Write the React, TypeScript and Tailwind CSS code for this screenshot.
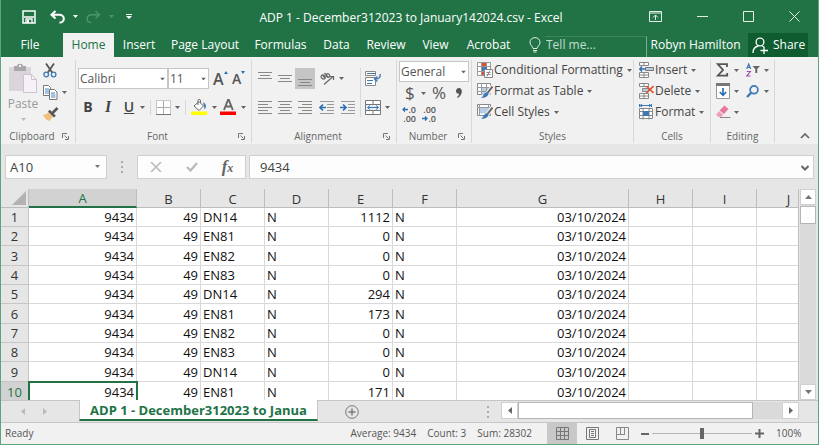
import type { ReactNode } from 'react';

const FONT = "font-['Open_Sans','Noto_Sans',sans-serif]";

/* ---------- small shared pieces ---------- */

function Caret({ className = 'text-[#666]' }: { className?: string }) {
  return (
    <svg width="5" height="3" viewBox="0 0 5 3" className={`shrink-0 ${className}`} aria-hidden="true">
      <path d="M0 0h5L2.5 3z" fill="currentColor" />
    </svg>
  );
}

function IconButton({ label, className = '', children }: { label: string; className?: string; children: ReactNode }) {
  return (
    <button type="button" aria-label={label} className={`flex shrink-0 items-center justify-center ${className}`}>
      {children}
    </button>
  );
}

function Launcher() {
  return (
    <svg width="7" height="7" viewBox="0 0 7 7" fill="none" stroke="#777" aria-hidden="true">
      <path d="M.5 5V.5H5M2.5 2.5l3 3M6.5 3v3.5H3" />
    </svg>
  );
}

function Group({
  name,
  width,
  launcher = false,
  children,
}: {
  name: string;
  width: string;
  launcher?: boolean;
  children: ReactNode;
}) {
  return (
    <section aria-label={name} className={`flex shrink-0 flex-col border-r border-[#d8d8d8] ${width}`}>
      <div className="h-[70px]">{children}</div>
      <div className="flex h-[13px] items-center text-[10px] leading-[13px] text-[#666]">
        <span className={`flex-1 text-center ${launcher ? 'pl-1' : ''}`}>{name}</span>
        {launcher && (
          <IconButton label={`${name} settings`} className="mr-1 h-3 w-3">
            <Launcher />
          </IconButton>
        )}
      </div>
    </section>
  );
}

function Divider({ className = '' }: { className?: string }) {
  return <span className={`w-px shrink-0 bg-[#d8d8d8] ${className}`} />;
}

/* ---------- icons ---------- */

const SaveIcon = () => (
  <svg width="14" height="14" viewBox="0 0 14 14" aria-hidden="true">
    <path d="M1 1h12v12H1z" fill="none" stroke="#fff" strokeWidth="1.5" />
    <path d="M2 7h10M4 13V9h6v4" fill="none" stroke="#fff" strokeWidth="1.3" />
    <path d="M5 10h2v3H5z" fill="#fff" />
  </svg>
);

const UndoIcon = ({ flip = false }: { flip?: boolean }) => (
  <svg width="15" height="14" viewBox="0 0 15 14" className={flip ? '-scale-x-100' : ''} aria-hidden="true">
    <path
      d="M5.5 1 1.5 4.8l4 3.8M2 4.8h7.2c3 0 4.6 1.7 4.6 3.9S12 12.6 9.500 12.6"
      fill="none"
      stroke={flip ? '#4f9470' : '#fff'}
      strokeWidth={flip ? 1.4 : 2.1}
    />
  </svg>
);

const PasteIcon = () => (
  <svg width="28" height="30" viewBox="0 0 28 30" aria-hidden="true">
    <path d="M0 4h22v24H0z" fill="#d9d5da" />
    <path d="M5 8V3h3c0-3 6-3 6 0h3v5z" fill="#aaa7ab" />
    <path d="M10 2h2v2h-2z" fill="#f1f1f1" />
    <path d="M14.500 11.500h8l5 5v13h-13z" fill="#f6f1f8" stroke="#c9c5cb" />
    <path d="M22.500 11.500v5h5" fill="none" stroke="#c9c5cb" />
  </svg>
);

const CutIcon = () => (
  <svg width="14" height="15" viewBox="0 0 14 15" fill="none" aria-hidden="true">
    <path d="M3 0.500 9.500 10M11 .5 4.500 10" stroke="#555" strokeWidth="1.8" />
    <circle cx="3.200" cy="11.500" r="2.300" stroke="#3e79b4" strokeWidth="1.300" />
    <circle cx="10.600" cy="11.500" r="2.300" stroke="#3e79b4" strokeWidth="1.300" />
  </svg>
);

const CopyIcon = () => (
  <svg width="15" height="15" viewBox="0 0 15 15" fill="#fff" stroke="#777" aria-hidden="true">
    <path d="M.5.5h5l2 2v8h-7z" />
    <path d="M2 4h4M2 6h4M2 8h4" stroke="#4a87bf" />
    <path d="M6.500 4.500h5l2.500 2.500v7.500H6.500z" />
    <path d="M8 8h4M8 10h4.500M8 12h4.500" stroke="#4a87bf" />
  </svg>
);

const BrushIcon = () => (
  <svg width="16" height="15" viewBox="0 0 16 15" aria-hidden="true">
    <path d="M0 7.500c2 .3 4-.6 5.500-2.500l4.500 4.500L6.500 14C3.500 13.300 1 11 0 7.500z" fill="#eec07c" />
    <path d="m5 4.500 1.800-1.700 6 6L11 10.500z" fill="#555" />
    <path d="m9.500 6 5-5" stroke="#555" strokeWidth="2.600" />
  </svg>
);

const BordersIcon = () => (
  <svg width="15" height="15" viewBox="0 0 15 15" aria-hidden="true">
    <path d="M.5.5h14v14H.5z" fill="#fff" stroke="#999" strokeDasharray="1 1" />
    <path d="M7.500 1v13M1 7.500h13" stroke="#aaa" />
    <path d="M0 14.500h15" stroke="#777" />
  </svg>
);

const FillIcon = () => (
  <svg width="17" height="16" viewBox="0 0 17 16" aria-hidden="true">
    <path d="m8 2.500 4.500 4.500-4.500 4.500L3 7z" fill="#fff" stroke="#666" />
    <path d="M7 6V1.500C7 0 9.500 0 9.500 1.500V4" fill="none" stroke="#666" />
    <path d="M12 3.500c3.200.5 3.700 4 2 7-1-1.500-1-4.500-2-7z" fill="#3e79b4" />
    <path d="M0 12.500h16V16H0z" fill="#ff0" />
  </svg>
);

const FontColorIcon = () => (
  <svg width="17" height="16" viewBox="0 0 17 16" aria-hidden="true">
    <path d="m4 11 4-10h.8l4 10M5.500 7.500h6" fill="none" stroke="#666" strokeWidth="1.900" />
    <path d="M0 12.500h16V16H0z" fill="#f00" />
  </svg>
);

const LINES = {
  top: 'M0 1.500h14M2 4.500h10M0 7.500h14',
  middle: 'M0 4.500h14M2 7.500h10M0 10.500h14',
  bottom: 'M0 8.500h14M2 11.500h10M0 14.500h14',
  left: 'M0 1.500h14M0 4.500h10M0 7.500h14M0 10.500h10M0 13.500h14',
  center: 'M0 1.500h14M2 4.500h10M0 7.500h14M2 10.500h10M0 13.500h14',
  right: 'M0 1.500h14M4 4.500h10M0 7.500h14M4 10.500h10M0 13.500h14',
};

const LinesIcon = ({ kind }: { kind: keyof typeof LINES }) => (
  <svg width="14" height="15" viewBox="0 0 14 15" aria-hidden="true">
    <path d={LINES[kind]} stroke="#888" />
  </svg>
);

const IndentIcon = ({ out = false }: { out?: boolean }) => (
  <svg width="15" height="15" viewBox="0 0 15 15" fill="none" aria-hidden="true">
    <path d="M1 1.500h14M8 4.500h7M8 7.500h7M8 10.500h7M1 13.500h14" stroke="#999" />
    <path d={out ? 'M7 7.500H1M4 4.500l-3 3 3 3' : 'M0 7.500h6M3 4.500l3 3-3 3'} stroke="#2e6fb0" strokeWidth="1.700" />
  </svg>
);

const OrientIcon = () => (
  <svg width="15" height="13" viewBox="0 0 15 13" fill="none" stroke="#666" aria-hidden="true">
    <ellipse cx="3.200" cy="5" rx="1.800" ry="2.200" transform="rotate(-45 3.200 5)" strokeWidth="1.200" />
    <path d="m2.500 3 3 3.500M4.500 1l4 4.500" strokeWidth="1.200" />
    <ellipse cx="8" cy="3.500" rx="1.600" ry="2" transform="rotate(-45 8 3.500)" strokeWidth="1.200" />
    <path d="m4 12.500 9-8M10 4.500h3.500V8" strokeWidth="1.200" />
  </svg>
);

const WrapIcon = () => (
  <svg width="17" height="16" viewBox="0 0 17 16" fill="none" aria-hidden="true">
    <path d="M.5.5h10v4H.5zM.5 6.500h10v8H.5z" fill="#fff" stroke="#888" />
    <path d="M2 2.500h9M2 9.500h6M2 12.500h5" stroke="#3e79b4" />
    <path d="M15 3c1 3-1 5-4.500 5M12.500 5.500l-3 2.500 3 2.500" stroke="#3e79b4" strokeWidth="1.400" />
  </svg>
);

const MergeIcon = () => (
  <svg width="16" height="15" viewBox="0 0 16 15" fill="none" aria-hidden="true">
    <path d="M.5.5h15v14H.5zM8 .5v4M8 10.500v4" fill="#fff" stroke="#777" />
    <path d="M.5 4.500h15v6H.5z" fill="#e4eff8" stroke="#777" />
    <path d="M3 7.500h10M5 5.500l-2.500 2L5 9.500M11 5.500l2.500 2L11 9.500" stroke="#3e79b4" />
  </svg>
);

const ArrowBlue = ({ left = false }: { left?: boolean }) => (
  <svg width="6" height="5" viewBox="0 0 6 5" fill="none" stroke="#2e6fb0" strokeWidth="1.300" aria-hidden="true">
    <path d={left ? 'M6 2.500H1M3 .5l-2 2 2 2' : 'M0 2.500h5M3 .5l2 2-2 2'} />
  </svg>
);

const DecimalIcon = ({ more = false }: { more?: boolean }) => (
  <span className="flex w-4 flex-col text-[9px] leading-[9px] font-semibold text-[#555]">
    <span className="flex items-center justify-end">
      {more && <ArrowBlue left />}
      {more ? '.0' : '.00'}
    </span>
    <span className="flex items-center justify-end">
      {!more && <ArrowBlue />}
      {more ? '.00' : '.0'}
    </span>
  </span>
);

const CondIcon = () => (
  <svg width="16" height="16" viewBox="0 0 16 16" aria-hidden="true">
    <path d="M.5.5h13v13H.5zM4.500 0v14M9.500 0v14M0 4.500h14M0 9.500h14" fill="#fff" stroke="#999" />
    <path d="M5 1h4v3H5zM5 10h3v3H5z" fill="#e0502f" />
    <path d="M5 5h5v4H5z" fill="#3e79b4" />
    <path d="M7.500 7.500h8v8h-8z" fill="#fff" stroke="#888" />
    <path d="M9.500 10.500h4M9.500 12.500h4M10 14.500l3-6" stroke="#888" />
  </svg>
);

const TableStyleIcon = ({ cell = false }: { cell?: boolean }) => (
  <svg width="16" height="16" viewBox="0 0 16 16" aria-hidden="true">
    <path d="M.5.5h13v11H.5z" fill="#fff" stroke="#888" />
    <path d={cell ? 'M3 3.500h9v6H3z' : 'M4 4h10v8H4z'} fill="#b7cfe6" />
    <path d={cell ? 'M2.500 0v12M0 3.500h14M11.500 0v4' : 'M4.500 0v12M9.500 0v12M0 4.500h14M0 8.500h14'} stroke="#999" />
    <path d="M15.500 3.500 10 11" stroke="#f1f1f1" strokeWidth="4" />
    <path d="M15.500 3.500 10.500 10" stroke="#666" strokeWidth="2" />
    <path d="M11 9.500c1.500 2-1 5.500-7 5.500 2-1 2-3 3.500-4.500 1-1 2.500-1.500 3.500-1z" fill="#3e79b4" />
  </svg>
);

const InsertIcon = () => (
  <svg width="15" height="16" viewBox="0 0 15 16" fill="#fff" stroke="#888" aria-hidden="true">
    <path d="M.5.5h9v3h-9zM5 .5v3M.5 10.500h9v5h-9zM5 10.500v5M.5 13h9" />
    <path d="M6.500 5.500h8v3h-8z" fill="#b7cfe6" stroke="#777" />
    <path d="M6 7H1M3 4.500.8 7 3 9.500" fill="none" stroke="#2e6fb0" strokeWidth="1.400" />
  </svg>
);

const DeleteIcon = () => (
  <svg width="15" height="16" viewBox="0 0 15 16" fill="#fff" stroke="#888" aria-hidden="true">
    <path d="M.5.5h9v3h-9zM5 .5v3M.5 10.500h9v5h-9zM5 10.500v5M.5 13h9" />
    <path d="M3.500 5.500h6v3h-6z" fill="#b7cfe6" />
    <path d="m7.500 3 7 7M14.500 3l-7 7" fill="none" stroke="#e0502f" strokeWidth="1.700" />
  </svg>
);

const FormatIcon = () => (
  <svg width="15" height="16" viewBox="0 0 15 16" fill="#fff" aria-hidden="true">
    <path d="M.5 4.500h13v10H.5zM4 4.500v11M10 4.500v11M.5 7.500h13M.5 11.500h13" stroke="#888" />
    <path d="M4 7h6v5H4z" fill="#3e79b4" />
    <path d="M1 1.500h11M.5 0v3M12.500 0v3M3 0 1 1.500 3 3M10 0l2 1.500L10 3" fill="none" stroke="#3e79b4" />
  </svg>
);

const SigmaIcon = () => (
  <svg width="13" height="14" viewBox="0 0 13 14" fill="none" stroke="#555" strokeWidth="1.800" aria-hidden="true">
    <path d="M11 4V1.200H1.800L7 7l-5.200 5.600H11.200V10" />
  </svg>
);

const SortIcon = () => (
  <svg width="15" height="14" viewBox="0 0 15 14" fill="none" aria-hidden="true">
    <path d="m.7 6 2-5 2 5M1.300 4.300h2.900" stroke="#3e79b4" strokeWidth="1.200" />
    <path d="M.8 8.500h3.500L.8 13h3.700" stroke="#9653a8" strokeWidth="1.200" />
    <path d="M6.500 3H14l-2.800 3v4H9.300V6z" fill="#666" />
  </svg>
);

const FillDownIcon = () => (
  <svg width="14" height="16" viewBox="0 0 14 16" fill="none" aria-hidden="true">
    <path d="M.5.5h13v15H.5z" fill="#fff" stroke="#999" />
    <path d="M0 0h14v3H0z" fill="#777" />
    <path d="M7 5v7M3.800 9 7 12.300 10.200 9" stroke="#2e6fb0" strokeWidth="1.700" />
  </svg>
);

const SearchIcon = () => (
  <svg width="13" height="13" viewBox="0 0 13 13" fill="none" stroke="#3e79b4" aria-hidden="true">
    <circle cx="8" cy="4.800" r="3.900" strokeWidth="1.700" />
    <path d="M5.300 7.700 1 12" strokeWidth="2.400" />
  </svg>
);

const EraserIcon = () => (
  <svg width="15" height="14" viewBox="0 0 15 14" aria-hidden="true">
    <path d="M8.500.5 12.500 4 8 9 3.500 5.500z" fill="#e8799a" />
    <path d="M3 6.200 7.400 9.700 5 12H2.500L0 9.700z" fill="#f0a0b5" />
    <path d="M4 12.500h10.500" stroke="#888" />
  </svg>
);

/* ---------- window chrome ---------- */

function TitleBar() {
  return (
    <header className="flex h-[33px] shrink-0 items-center bg-[#217346] text-white">
      <div className="flex flex-1 items-center pl-[21px]">
        <IconButton label="Save">
          <SaveIcon />
        </IconButton>
        <IconButton label="Undo" className="ml-[14px] gap-2">
          <UndoIcon />
          <Caret className="text-white" />
        </IconButton>
        <IconButton label="Redo" className="ml-2 gap-2">
          <UndoIcon flip />
          <Caret className="text-[#4f9470]" />
        </IconButton>
        <IconButton label="Customize toolbar" className="ml-3">
          <svg width="6" height="6" viewBox="0 0 6 6" aria-hidden="true">
            <path d="M0 0h6v1H0zM0 2h6L3 5z" fill="#fff" />
          </svg>
        </IconButton>
      </div>
      <h1 className="pt-[3px] text-xs leading-4">ADP 1 - December312023 to January142024.csv - Excel</h1>
      <div className="flex flex-1 items-center justify-end gap-[35px] pr-[18px]">
        <IconButton label="Ribbon display options">
          <svg width="13" height="11" viewBox="0 0 13 11" fill="none" stroke="#e3efe8" aria-hidden="true">
            <path d="M.5.5h12v10H.5zM0 2h13M6.500 9V4M4 6.500 6.500 4 9 6.500" />
          </svg>
        </IconButton>
        <IconButton label="Minimize">
          <svg width="11" height="11" viewBox="0 0 11 11" stroke="#e3efe8" aria-hidden="true">
            <path d="M0 5.500h11" />
          </svg>
        </IconButton>
        <IconButton label="Maximize">
          <svg width="11" height="11" viewBox="0 0 11 11" fill="none" stroke="#e3efe8" aria-hidden="true">
            <path d="M.5.5h10v10H.5z" />
          </svg>
        </IconButton>
        <IconButton label="Close">
          <svg width="11" height="11" viewBox="0 0 11 11" stroke="#e3efe8" aria-hidden="true">
            <path d="m.5.5 10 10M10.500.5l-10 10" />
          </svg>
        </IconButton>
      </div>
    </header>
  );
}

const TABS: [string, string][] = [
  ['Insert', 'w-[50px]'],
  ['Page Layout', 'w-[82px]'],
  ['Formulas', 'w-[69px]'],
  ['Data', 'w-[43px]'],
  ['Review', 'w-[56px]'],
  ['View', 'w-[43px]'],
  ['Acrobat', 'w-[63px]'],
];

function TabBar() {
  return (
    <nav className="flex h-6 shrink-0 bg-[#217346] text-xs whitespace-nowrap text-white">
      <button type="button" className="w-[62px] shrink-0 pr-1">
        File
      </button>
      <button type="button" className="w-[51px] shrink-0 bg-[#f1f1f1] text-[#217346]">
        Home
      </button>
      {TABS.map(([name, width]) => (
        <button key={name} type="button" className={`shrink-0 ${width}`}>
          {name}
        </button>
      ))}
      <label htmlFor="tell-me" aria-label="Tell me" className="flex w-[25px] shrink-0 items-center pl-[9px]">
        <svg width="12" height="16" viewBox="0 0 12 16" fill="none" stroke="#e3efe8" aria-hidden="true">
          <path d="M4 11.500c0-2-3-3-3-6 0-6.500 10-6.500 10 0 0 3-3 4-3 6z" />
          <path d="M4 13.500h4M4.500 15h3" />
        </svg>
      </label>
      <input
        id="tell-me"
        placeholder="Tell me..."
        className="mt-[3px] min-w-0 flex-1 border-t border-r border-t-[#3c8560] border-r-[#7fb096] pb-1 pl-px outline-none placeholder:text-[#c5dccf]"
      />
      <button type="button" className="w-[101px] shrink-0 pr-1">
        Robyn Hamilton
      </button>
      <button type="button" className="mr-[10px] flex w-[60px] shrink-0 items-center gap-1 bg-[#0e5c2f] pl-1">
        <svg width="17" height="17" viewBox="0 0 17 17" fill="none" stroke="#fff" strokeWidth="1.300" aria-hidden="true">
          <circle cx="8" cy="5" r="3.900" />
          <path d="M1 16c0-4 2.500-6.500 5.500-7M10 9c1 .3 1.800.8 2.500 1.500M12 10v7M8.500 13.500h7.500" />
        </svg>
        Share
      </button>
    </nav>
  );
}

/* ---------- ribbon ---------- */

function Combo({ label, value, width, height }: { label: string; value: string; width: string; height: string }) {
  return (
    <span className={`relative flex shrink-0 ${width} ${height}`}>
      <select
        aria-label={label}
        defaultValue={value}
        className="h-full w-full appearance-none border border-[#c6c6c6] bg-white pl-px text-xs text-[#555]"
      >
        <option>{value}</option>
      </select>
      <Caret className="pointer-events-none absolute top-1/2 right-[3px] -translate-y-1/2 text-[#666]" />
    </span>
  );
}

function ListButton({ icon, children }: { icon: ReactNode; children: ReactNode }) {
  return (
    <button type="button" className="flex h-5 items-center gap-px whitespace-nowrap">
      {icon}
      <span>{children}</span>
      <Caret className="ml-[3px] text-[#666]" />
    </button>
  );
}

function Ribbon() {
  return (
    <div className="flex h-[87px] shrink-0 overflow-hidden bg-[#f1f1f1] pt-[3px] pb-[1px] text-xs text-[#444]">
      <Group name="Clipboard" width="w-[75px]" launcher>
        <div className="flex gap-[5px] pt-[3px] pl-[7px]">
          <button type="button" className="flex w-[30px] shrink-0 flex-col items-center text-[#999]">
            <PasteIcon />
            <span className="pt-[3px] leading-4">Paste</span>
            <Caret className="mt-[6px] text-[#bbb]" />
          </button>
          <div className="flex flex-col items-start gap-[7px]">
            <IconButton label="Cut">
              <CutIcon />
            </IconButton>
            <IconButton label="Copy" className="gap-1">
              <CopyIcon />
              <Caret />
            </IconButton>
            <IconButton label="Format painter">
              <BrushIcon />
            </IconButton>
          </div>
        </div>
      </Group>

      <Group name="Font" width="w-[176px]" launcher>
        <div className="flex flex-col gap-2 pt-2 pl-[2px]">
          <div className="flex items-center">
            <Combo label="Font" value="Calibri" width="w-[90px]" height="h-[21px]" />
            <Combo label="Font size" value="11" width="w-[41px]" height="h-[21px]" />
            <button
              type="button"
              aria-label="Increase font size"
              className="ml-1 flex w-5 text-[16px] leading-5 font-semibold text-[#555]"
            >
              A
              <svg width="4" height="3" viewBox="0 0 4 3" className="mt-[2px]" aria-hidden="true">
                <path d="M0 3h4L2 0z" fill="#2e6fb0" />
              </svg>
            </button>
            <button
              type="button"
              aria-label="Decrease font size"
              className="flex w-5 text-[14px] leading-5 font-semibold text-[#555]"
            >
              A
              <svg width="4" height="3" viewBox="0 0 4 3" className="mt-[2px]" aria-hidden="true">
                <path d="M0 0h4L2 3z" fill="#2e6fb0" />
              </svg>
            </button>
          </div>
          <div className="flex h-5 items-center">
            <button type="button" className="w-5 text-[14px] font-bold">
              B
            </button>
            <button type="button" className="w-5 font-['Liberation_Serif',serif] text-[16px] font-bold italic">
              I
            </button>
            <button type="button" className="w-[22px] text-[14px] font-semibold underline">
              U
            </button>
            <IconButton label="Underline options">
              <Caret />
            </IconButton>
            <Divider className="mx-[5px] h-[15px]" />
            <IconButton label="Borders" className="gap-1">
              <BordersIcon />
              <Caret />
            </IconButton>
            <Divider className="mx-[5px] h-[15px]" />
            <IconButton label="Fill color" className="gap-1">
              <FillIcon />
              <Caret />
            </IconButton>
            <IconButton label="Font color" className="ml-[3px] gap-1">
              <FontColorIcon />
              <Caret />
            </IconButton>
          </div>
        </div>
      </Group>

      <Group name="Alignment" width="w-[145px]" launcher>
        <div className="flex pt-2 pl-[3px]">
          <div className="flex w-[105px] flex-col gap-2">
            <div className="flex h-[21px] items-center">
              <IconButton label="Top align" className="h-[21px] w-5">
                <LinesIcon kind="top" />
              </IconButton>
              <IconButton label="Middle align" className="h-[21px] w-5">
                <LinesIcon kind="middle" />
              </IconButton>
              <IconButton label="Bottom align" className="h-[21px] w-5 bg-[#c5c5c5]">
                <LinesIcon kind="bottom" />
              </IconButton>
              <IconButton label="Orientation" className="ml-[5px] gap-1">
                <OrientIcon />
                <Caret />
              </IconButton>
            </div>
            <div className="flex h-5 items-center">
              <IconButton label="Align left" className="w-5">
                <LinesIcon kind="left" />
              </IconButton>
              <IconButton label="Center" className="w-5">
                <LinesIcon kind="center" />
              </IconButton>
              <IconButton label="Align right" className="w-5">
                <LinesIcon kind="right" />
              </IconButton>
              <IconButton label="Decrease indent" className="w-[22px]">
                <IndentIcon out />
              </IconButton>
              <IconButton label="Increase indent" className="w-5">
                <IndentIcon />
              </IconButton>
            </div>
          </div>
          <Divider className="h-[49px]" />
          <div className="flex flex-col items-start gap-2 pl-1">
            <IconButton label="Wrap text" className="h-[21px]">
              <WrapIcon />
            </IconButton>
            <IconButton label="Merge and center" className="h-5 gap-1">
              <MergeIcon />
              <Caret />
            </IconButton>
          </div>
        </div>
      </Group>

      <Group name="Number" width="w-[75px]" launcher>
        <div className="flex flex-col px-[2px] pt-px">
          <Combo label="Number format" value="General" width="w-[70px]" height="h-[21px]" />
          <div className="flex h-[22px] items-center text-[17px] leading-5 text-[#555]">
            <button type="button" aria-label="Currency" className="flex w-[30px] items-center gap-[6px] pl-[6px]">
              $
              <Caret />
            </button>
            <button type="button" className="w-5">
              %
            </button>
            <IconButton label="Comma style" className="w-5">
              <svg width="6" height="10" viewBox="0 0 6 10" aria-hidden="true">
                <path d="M3 0c4 0 4 7-1.500 10L1 9c1.500-1 2-2 2-3.200C-1 6-1 0 3 0z" fill="#555" />
              </svg>
            </IconButton>
          </div>
          <div className="flex gap-1 pt-px pl-px">
            <IconButton label="Increase decimal">
              <DecimalIcon more />
            </IconButton>
            <IconButton label="Decrease decimal">
              <DecimalIcon />
            </IconButton>
          </div>
        </div>
      </Group>

      <Group name="Styles" width="w-[162px]">
        <div className="flex flex-col items-start gap-px pl-[5px]">
          <ListButton icon={<CondIcon />}>Conditional Formatting</ListButton>
          <ListButton icon={<TableStyleIcon />}>Format as Table</ListButton>
          <ListButton icon={<TableStyleIcon cell />}>Cell Styles</ListButton>
        </div>
      </Group>

      <Group name="Cells" width="w-[77px]">
        <div className="flex flex-col items-start gap-px pl-[5px]">
          <ListButton icon={<InsertIcon />}>Insert</ListButton>
          <ListButton icon={<DeleteIcon />}>Delete</ListButton>
          <ListButton icon={<FormatIcon />}>Format</ListButton>
        </div>
      </Group>

      <Group name="Editing" width="w-[64px]">
        <div className="grid grid-cols-[30px_30px] grid-rows-[20px_20px_20px] gap-y-px pl-[5px]">
          <IconButton label="AutoSum" className="justify-start gap-[5px]">
            <SigmaIcon />
            <Caret />
          </IconButton>
          <IconButton label="Sort and filter" className="justify-start gap-[3px]">
            <SortIcon />
            <Caret />
          </IconButton>
          <IconButton label="Fill" className="justify-start gap-1">
            <FillDownIcon />
            <Caret />
          </IconButton>
          <IconButton label="Find and select" className="justify-start gap-[5px]">
            <SearchIcon />
            <Caret />
          </IconButton>
          <IconButton label="Clear" className="justify-start gap-[3px]">
            <EraserIcon />
            <Caret />
          </IconButton>
        </div>
      </Group>

      <div className="flex flex-1 items-end justify-end pr-2 pb-1">
        <IconButton label="Collapse ribbon">
          <svg width="10" height="6" viewBox="0 0 10 6" fill="none" stroke="#666" strokeWidth="1.700" aria-hidden="true">
            <path d="m1 5 4-4 4 4" />
          </svg>
        </IconButton>
      </div>
    </div>
  );
}

/* ---------- formula bar ---------- */

function Dots() {
  return (
    <svg width="2" height="12" viewBox="0 0 2 12" fill="#aaa" aria-hidden="true">
      <path d="M0 0h2v2H0zM0 5h2v2H0zM0 10h2v2H0z" />
    </svg>
  );
}

function FormulaBar() {
  return (
    <div className="flex shrink-0 px-1 pt-[11px] pb-[10px] text-[13px] text-[#444]">
      <div className="relative flex h-6 w-[102px] shrink-0">
        <input
          aria-label="Name box"
          defaultValue="A10"
          className="h-full w-full border border-[#d0d0d0] bg-[#fdfdfd] pl-1 outline-none"
        />
        <Caret className="pointer-events-none absolute top-[10px] right-[7px] text-[#777]" />
      </div>
      <div className="flex w-[30px] shrink-0 items-center justify-center">
        <Dots />
      </div>
      <div className="flex h-6 w-[109px] shrink-0 items-center border border-[#d0d0d0] bg-[#fdfdfd]">
        <IconButton label="Cancel" className="w-9">
          <svg width="12" height="10" viewBox="0 0 12 10" stroke="#bcbcbc" strokeWidth="1.600" aria-hidden="true">
            <path d="m1 0 10 10M11 0 1 10" />
          </svg>
        </IconButton>
        <IconButton label="Enter" className="w-9">
          <svg width="12" height="10" viewBox="0 0 12 10" fill="none" stroke="#bcbcbc" strokeWidth="2.400" aria-hidden="true">
            <path d="m1 5 3.500 3.500L11 1" />
          </svg>
        </IconButton>
        <button
          type="button"
          aria-label="Insert function"
          className="flex w-9 items-baseline justify-center font-['Liberation_Serif',serif] text-[17px] leading-5 font-bold text-[#666] italic"
        >
          f<span className="text-[12px]">x</span>
        </button>
      </div>
      <div className="relative ml-[3px] flex h-6 min-w-0 flex-1">
        <input
          aria-label="Formula"
          defaultValue="9434"
          className="h-full w-full border border-[#d0d0d0] bg-[#fdfdfd] pl-[10px] outline-none"
        />
        <svg
          width="8"
          height="6"
          viewBox="0 0 8 6"
          fill="none"
          stroke="#666"
          strokeWidth="2"
          className="pointer-events-none absolute top-[10px] right-[5px]"
          aria-hidden="true"
        >
          <path d="m.5 1 3.500 3.500L7.500 1" />
        </svg>
      </div>
    </div>
  );
}

/* ---------- sheet ---------- */

const COLUMNS: [string, string][] = [
  ['A', 'w-[108px]'],
  ['B', 'w-16'],
  ['C', 'w-16'],
  ['D', 'w-16'],
  ['E', 'w-16'],
  ['F', 'w-16'],
  ['G', 'w-[172px]'],
  ['H', 'w-16'],
  ['I', 'w-16'],
  ['J', 'w-16'],
];

const DATA: [string, number][] = [
  ['DN14', 1112],
  ['EN81', 0],
  ['EN82', 0],
  ['EN83', 0],
  ['DN14', 294],
  ['EN81', 173],
  ['EN82', 0],
  ['EN83', 0],
  ['DN14', 0],
  ['EN81', 171],
];

const ACTIVE_ROW = 9;

function Sheet() {
  return (
    <div className="flex min-h-0 flex-1">
      <div className="min-w-0 flex-1 overflow-hidden border-r border-[#bdbdbd]">
        <table className="w-[820px] table-fixed border-separate border-spacing-0 text-[13px] leading-[17px] text-[#111]">
          <thead>
            <tr className="h-[19px] leading-4 text-[#333]">
              <th aria-label="Select all" className="w-7 border-r border-b border-[#bdbdbd] p-0">
                <svg width="14" height="14" viewBox="0 0 14 14" className="mr-[2px] ml-auto" aria-hidden="true">
                  <path d="M14 0v14H0z" fill="#b3b3b3" />
                </svg>
              </th>
              {COLUMNS.map(([name, width]) => (
                <th
                  key={name}
                  scope="col"
                  className={`border-r px-0 pb-0 font-normal ${width} ${
                    name === 'A'
                      ? 'border-b-2 border-r-[#bdbdbd] border-b-[#217346] bg-[#d2d2d2] pt-px text-[#217346]'
                      : 'border-b border-[#bdbdbd] pt-[2px]'
                  }`}
                >
                  {name}
                </th>
              ))}
            </tr>
          </thead>
          <tbody>
            {DATA.map(([code, amount], i) => {
              const active = i === ACTIVE_ROW;
              const cell = 'border-r border-b border-[#d9d9d9] bg-white px-[2px] pt-px pb-0';
              return (
                <tr key={i} className="h-[19px] nth-[3n]:h-5 last:h-5">
                  <th
                    scope="row"
                    className={`border-r border-b border-[#c6c6c6] px-0 pt-px pb-0 font-normal ${
                      active ? 'bg-[#d2d2d2] text-[#217346]' : 'text-[#333]'
                    }`}
                  >
                    {i + 1}
                  </th>
                  <td
                    className={`text-right ${cell} ${
                      active ? 'relative z-10 outline-2 -outline-offset-1 outline-[#217346]' : ''
                    }`}
                  >
                    9434
                  </td>
                  <td className={`text-right ${cell}`}>49</td>
                  <td className={cell}>{code}</td>
                  <td className={cell}>N</td>
                  <td className={`text-right ${cell}`}>{amount}</td>
                  <td className={cell}>N</td>
                  <td className={`text-right ${cell}`}>03/10/2024</td>
                  <td className={cell} />
                  <td className={cell} />
                  <td className={cell} />
                </tr>
              );
            })}
          </tbody>
        </table>
      </div>
      <div className="mr-[2px] ml-px flex w-4 shrink-0 flex-col bg-[#dadada]">
        <IconButton label="Scroll up" className="h-4 border border-[#d0d0d0] bg-white">
          <svg width="7" height="4" viewBox="0 0 7 4" aria-hidden="true">
            <path d="M0 4h7L3.500 0z" fill="#777" />
          </svg>
        </IconButton>
        <div className="mt-px h-[18px] border border-[#b5b5b5] bg-white" />
        <div className="flex-1" />
        <IconButton label="Scroll down" className="h-4 border border-[#d0d0d0] bg-white">
          <svg width="7" height="4" viewBox="0 0 7 4" aria-hidden="true">
            <path d="M0 0h7L3.500 4z" fill="#777" />
          </svg>
        </IconButton>
      </div>
    </div>
  );
}

function SideArrow({ right = false, color }: { right?: boolean; color: string }) {
  return (
    <svg width="4" height="7" viewBox="0 0 4 7" className={color} aria-hidden="true">
      <path d={right ? 'M0 0v7l4-3.500z' : 'M4 0v7L0 3.500z'} fill="currentColor" />
    </svg>
  );
}

function SheetTabs() {
  return (
    <div className="flex h-[22px] shrink-0 border-t border-[#c6c6c6]">
      <div className="flex w-[78px] shrink-0 items-center gap-[18px] pl-5">
        <IconButton label="Previous sheet">
          <SideArrow color="text-[#bbb]" />
        </IconButton>
        <IconButton label="Next sheet">
          <SideArrow right color="text-[#bbb]" />
        </IconButton>
      </div>
      <button
        type="button"
        className="-mt-px h-[21px] w-[239px] shrink-0 border-r border-b-2 border-l border-r-[#c6c6c6] border-b-[#217346] border-l-[#c6c6c6] bg-white text-[13px] leading-4 font-bold whitespace-nowrap text-[#217346]"
      >
        ADP 1 - December312023 to Janua
      </button>
      <IconButton label="New sheet" className="ml-[27px]">
        <svg width="14" height="14" viewBox="0 0 14 14" fill="none" stroke="#777" aria-hidden="true">
          <circle cx="7" cy="7" r="6.300" />
          <path d="M7 3.500v7M3.500 7h7" strokeWidth="1.400" />
        </svg>
      </IconButton>
      <div className="flex min-w-0 flex-1 items-center justify-end pr-3">
        <Dots />
      </div>
      <div className="mt-px mr-[19px] flex h-[17px] w-[298px] shrink-0 bg-[#dadada]">
        <IconButton label="Scroll left" className="w-[17px] border border-[#d0d0d0] bg-white">
          <SideArrow color="text-[#666]" />
        </IconButton>
        <div className="w-[235px] border border-[#b5b5b5] bg-white" />
        <div className="flex-1" />
        <IconButton label="Scroll right" className="w-[17px] border border-[#d0d0d0] bg-white">
          <SideArrow right color="text-[#666]" />
        </IconButton>
      </div>
    </div>
  );
}

function StatusBar() {
  return (
    <footer className="flex h-[22px] shrink-0 items-center border-t border-[#c6c6c6] bg-[#f1f1f1] text-[10px] whitespace-nowrap text-[#555]">
      <span className="flex-1 pl-1">Ready</span>
      <div className="flex gap-[11px] pr-[15px]">
        <span>Average: 9434</span>
        <span>Count: 3</span>
        <span>Sum: 28302</span>
      </div>
      <IconButton label="Normal view" className="h-full w-[30px] bg-[#c8c8c8]">
        <svg width="13" height="13" viewBox="0 0 13 13" fill="none" stroke="#777" aria-hidden="true">
          <path d="M.5.5h12v12H.5zM4.500 0v13M8.500 0v13M0 4.500h13M0 8.500h13" />
        </svg>
      </IconButton>
      <IconButton label="Page layout view" className="w-[30px]">
        <svg width="13" height="13" viewBox="0 0 13 13" fill="none" stroke="#777" aria-hidden="true">
          <path d="M.5.5h12v12H.5zM3.500 2.500h6v8h-6zM5 4.500h3M5 6.500h3M5 8.500h3" />
        </svg>
      </IconButton>
      <IconButton label="Page break preview" className="w-[30px]">
        <svg width="13" height="13" viewBox="0 0 13 13" fill="none" stroke="#888" aria-hidden="true">
          <path d="M.5.5h12v12H.5zM4.500 0v7M8.500 0v7M0 7.500h9" />
        </svg>
      </IconButton>
      <IconButton label="Zoom out" className="ml-1 w-[8px]">
        <svg width="8" height="2" viewBox="0 0 8 2" aria-hidden="true">
          <path d="M0 0h8v2H0z" fill="#666" />
        </svg>
      </IconButton>
      <input
        type="range"
        aria-label="Zoom"
        min="0"
        max="200"
        defaultValue="100"
        className="mx-[3px] h-3 w-[100px] shrink-0 appearance-none bg-transparent [&::-webkit-slider-runnable-track]:h-px [&::-webkit-slider-runnable-track]:bg-[#b5b5b5] [&::-webkit-slider-thumb]:-mt-[5px] [&::-webkit-slider-thumb]:h-[11px] [&::-webkit-slider-thumb]:w-1 [&::-webkit-slider-thumb]:appearance-none [&::-webkit-slider-thumb]:bg-[#666]"
      />
      <IconButton label="Zoom in" className="w-[9px]">
        <svg width="9" height="9" viewBox="0 0 9 9" stroke="#666" strokeWidth="2" aria-hidden="true">
          <path d="M0 4.500h9M4.500 0v9" />
        </svg>
      </IconButton>
      <span className="w-[54px] pl-3">100%</span>
    </footer>
  );
}

export default function App() {
  return (
    <div className={`flex h-screen w-full flex-col overflow-hidden border-x border-b border-[#5fa27f] bg-[#e6e6e6] ${FONT}`}>
      <TitleBar />
      <TabBar />
      <Ribbon />
      <FormulaBar />
      <Sheet />
      <SheetTabs />
      <StatusBar />
    </div>
  );
}
